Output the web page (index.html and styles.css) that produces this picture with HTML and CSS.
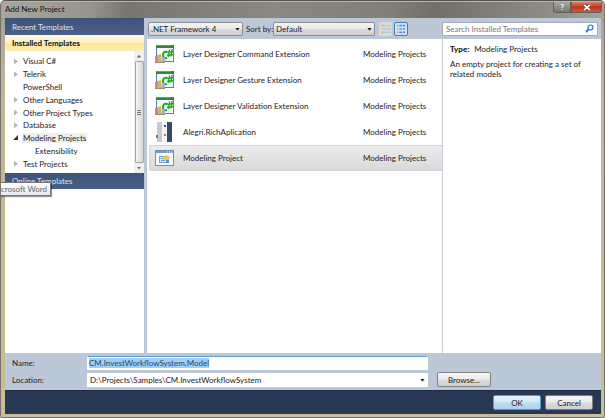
FILE: index.html
```html
<!DOCTYPE html>
<html lang="en">
<head>
<meta charset="utf-8">
<title>Add New Project</title>
<link rel="stylesheet" href="styles.css">
</head>
<body>
<svg class="defs" aria-hidden="true">
  <symbol id="csharp" viewBox="0 0 20 20">
    <rect x="1.500" y="1.500" width="17" height="16" fill="#f4f8fc" stroke="#5f7f9f"/>
    <rect x="1" y="1" width="18" height="3" fill="#2d8a2d"/>
    <path d="M2 1.500h14" stroke="#5cae50"/>
    <path d="M12.500 8q-4.500-1-4.500 3t4 3" fill="none" stroke="#18a818" stroke-width="2"/>
    <path d="M14.500 5.500l-1 7.500M17 5l-1 7.500M12.500 8.500l6-1M12 11.500l6-1" stroke="#18a818" stroke-width="1.300"/>
    <path d="M0 12l3-1v8H0z" fill="#b58ac0"/>
    <path d="M3 11l3-1 1 9H3z" fill="#d9b25a"/>
    <path d="M7 13h3v6H7z" fill="#8fb4e0"/>
    <path d="M0 18.500h10" stroke="#9a8a6a"/>
  </symbol>
</svg>
<div class="window">
  <header class="titlebar">
    <h1>Add New Project</h1>
    <div class="caption">
      <button class="help" aria-label="Help">?</button>
      <button class="close" aria-label="Close"><svg viewBox="0 0 8 7"><path d="M1 .8l6 5.400M7 .8L1 6.200" stroke="#6b2a20" stroke-width="2.800"/><path d="M1 .8l6 5.400M7 .8L1 6.200" stroke="#fff" stroke-width="1.800"/></svg></button>
    </div>
  </header>
  <main class="content">
    <nav class="sidebar">
      <button class="bar">Recent Templates</button>
      <button class="bar active">Installed Templates</button>
      <div class="treebox">
        <ul class="tree">
          <li><i class="shut"></i><span>Visual C#</span></li>
          <li><i class="shut"></i><span>Telerik</span></li>
          <li><i></i><span>PowerShell</span></li>
          <li><i class="shut"></i><span>Other Languages</span></li>
          <li><i class="shut"></i><span>Other Project Types</span></li>
          <li><i class="shut"></i><span>Database</span></li>
          <li><i class="open"></i><span class="picked">Modeling Projects</span></li>
          <li class="child"><i></i><span>Extensibility</span></li>
          <li><i class="shut"></i><span>Test Projects</span></li>
        </ul>
        <div class="scroll"><b class="up"></b><div class="thumb"></div><b class="down"></b></div>
      </div>
      <div class="online">
        <button class="bar">Online Templates</button>
        <div class="tooltip">crosoft Word</div>
      </div>
    </nav>
    <section class="browser">
      <div class="toolbar">
        <div class="combo framework"><select aria-label="Framework"><option>.NET Framework 4</option></select></div>
        <label for="sort">Sort by:</label>
        <div class="combo sort"><select id="sort"><option>Default</option></select></div>
        <button class="view" aria-label="Small icons"><svg viewBox="0 0 12 12"><path d="M1 1h2v2H1zM7 5h2v2H7zM1 9h2v2H1z" fill="#e3a06c"/><path d="M7 1h2v2H7zM1 5h2v2H1zM7 9h2v2H7z" fill="#d9c77c"/><path d="M4 2h2M10 2h2M4 6h2M10 6h2M4 10h2M10 10h2" stroke="#9fb0c8"/></svg></button>
        <button class="view on" aria-label="Medium icons"><svg viewBox="0 0 12 12"><path d="M1 1h2v2H1zM1 9h2v2H1z" fill="#e08a70"/><path d="M1 5h2v2H1z" fill="#d9b060"/><path d="M4 2h3M8 2h3M4 6h3M8 6h3M4 10h3M8 10h3" stroke="#6f8cd0" stroke-width="2"/></svg></button>
        <div class="search">
          <input type="search" aria-label="Search" placeholder="Search Installed Templates">
          <svg viewBox="0 0 9 9"><circle cx="5.500" cy="3.500" r="2.500" fill="#e8f3ff" stroke="#3375bd" stroke-width="1.200"/><path d="M3.500 5.500L1 8" stroke="#3375bd" stroke-width="1.800"/></svg>
        </div>
      </div>
      <div class="panes">
        <ul class="list">
          <li><svg viewBox="0 0 20 20"><use href="#csharp"/></svg><span>Layer Designer Command Extension</span><em>Modeling Projects</em></li>
          <li><svg viewBox="0 0 20 20"><use href="#csharp"/></svg><span>Layer Designer Gesture Extension</span><em>Modeling Projects</em></li>
          <li><svg viewBox="0 0 20 20"><use href="#csharp"/></svg><span>Layer Designer Validation Extension</span><em>Modeling Projects</em></li>
          <li><svg viewBox="0 0 20 20"><path d="M2 0h5v20H2z" fill="#c9c9cb"/><path d="M7 0h5v20H7z" fill="#f4f4f4"/><path d="M12 0h5v20h-5z" fill="#33496f"/><path d="M9 3h2v2H9z" fill="#3547d8"/><path d="M9 12h2v2H9z" fill="#e0603c"/><path d="M1 13h2v3H1z" fill="#777"/></svg><span>Alegri.RichAplication</span><em>Modeling Projects</em></li>
          <li class="selected"><svg viewBox="0 0 20 20"><rect x=".5" y="2.500" width="18" height="15" fill="#f7fbff" stroke="#7d8da3"/><path d="M1 3h17v2H1z" fill="#6b9fdc"/><path d="M12 4h1M14 4h1M16 4h1" stroke="#fff"/><rect x="4.500" y="8.500" width="7" height="6" fill="#d5e6fa" stroke="#6f9fd4"/><path d="M6 10.500h4M6 12.500h4" stroke="#6f9fd4"/><path d="M9 8l3-1 3 2-1 3-3 1-2-2z" fill="#eac25c"/><path d="M11 12h3v3h-3z" fill="#5d91cf"/></svg><span>Modeling Project</span><em>Modeling Projects</em></li>
        </ul>
        <aside class="details">
          <p><strong>Type:</strong> Modeling Projects</p>
          <p>An empty project for creating a set of related models</p>
        </aside>
      </div>
    </section>
  </main>
  <form class="fields">
    <label for="name">Name:</label>
    <div class="name"><input id="name" value="CM.InvestWorkflowSystem.Model"></div>
    <label class="second" for="location">Location:</label>
    <div class="combo location"><select id="location"><option>D:\Projects\Samples\CM.InvestWorkflowSystem</option></select></div>
    <button type="button" class="push">Browse...</button>
  </form>
  <footer class="actions">
    <button class="push ok">OK</button>
    <button class="push">Cancel</button>
  </footer>
</div>
<script src="script.js"></script>
</body>
</html>
```
FILE: script.js
```js
// The project name starts focused and selected, ready to be typed over.
const nameField = document.getElementById("name");
nameField.focus();
nameField.select();
```
FILE: styles.css
```css
* { box-sizing: border-box; }
body { margin: 0; font: 8px/10px Lato, "Open Sans", sans-serif; color: #22222a; }
button, input, select { font: inherit; color: inherit; margin: 0; padding: 0; }
ul { list-style: none; margin: 0; padding: 0; }
svg { display: block; }
.defs { position: absolute; width: 0; height: 0; }

.window {
  display: flex; flex-direction: column; height: 100vh; overflow: hidden;
  padding: 0 3px 3px 4px;
  border: 1px solid #77736a; border-top-color: #56554f; border-radius: 5px 5px 2px 2px;
  background: linear-gradient(#8b8982, #aaa69d 25px, #bfb596 80px, #cabd97);
}
.titlebar {
  flex: none; display: flex; justify-content: space-between; height: 17px;
  margin: 0 -3px 0 -4px; padding: 0 2px 0 4px;
  border-top: 1px solid #b5b3ac;
  background: linear-gradient(100deg, #aaa79e 0, #97948b 15%, #77756d 21%, #8a8880 45%, #817f77 64%, #716f68 72%, #8d8b83 90%, #a5a29a);
}
h1 { margin: 0; font-size: 8px; line-height: 15px; font-weight: 400; color: #111; }
.caption { display: flex; height: 11px; }
.caption button { display: grid; place-items: center; border: 1px solid #625f5b; border-top: 0; line-height: 9px; }
.help { width: 18px; border-radius: 0 0 0 3px; background: linear-gradient(#aaa8a2, #77756f); font-weight: 700; }
.caption .help { color: #fff; }
.close { width: 31px; border-radius: 0 0 3px 0; background: linear-gradient(#d9836c, #bd351d 50%, #d2583a); }
.close svg { width: 8px; height: 7px; }

.content { flex: 1; display: flex; min-height: 0; background: #fff; }
.sidebar { flex: none; width: 139px; }
.bar {
  display: block; width: 100%; height: 17px; padding: 0 0 0 7px; border: 0; text-align: left;
  background: linear-gradient(#3d5277, #4a6087); color: #dfe5ef;
}
.bar.active { height: 16px; background: linear-gradient(#fff8e4, #fff1c3 48%, #ffe69f 52%, #ffebb2); color: #111; font-weight: 700; }
.treebox { display: flex; height: 122px; }
.tree { flex: 1; display: flex; flex-direction: column; padding: 4px 0 3px 8px; }
.tree li { flex: 1; display: flex; align-items: center; }
.tree i { flex: none; width: 9px; height: 6px; }
.tree span { padding: 0 1px; }
.tree .picked { background: #efefef; }
.tree .child { padding-left: 12px; }
.shut::before { content: ""; display: block; width: 4px; height: 6px; margin-left: 1px; background: #b8b8b8; clip-path: polygon(0 0, 100% 50%, 0 100%); }
.open::before { content: ""; display: block; width: 5px; height: 5px; background: #333; clip-path: polygon(100% 0, 100% 100%, 0 100%); }
.scroll { display: flex; flex-direction: column; align-items: center; width: 10px; background: #f0f0f1; }
.scroll b { flex: none; height: 10px; display: grid; place-items: center; }
.scroll b::before { content: ""; width: 4px; height: 3px; background: #606060; }
.scroll .up::before { clip-path: polygon(50% 0, 100% 100%, 0 100%); }
.scroll .down::before { clip-path: polygon(0 0, 100% 0, 50% 100%); }
.thumb { flex: 1; width: 9px; border: 1px solid #a5a5a8; border-radius: 1px; background: linear-gradient(90deg, #f3f3f3, #d7d7da); display: grid; place-items: center; }
.thumb::before { content: ""; width: 4px; height: 5px; background: repeating-linear-gradient(#777 0 1px, transparent 1px 2px); }
.online { position: relative; }
.online .bar { height: 16px; }
.tooltip {
  position: absolute; top: 9px; left: -5px; padding: 1px 3px 1px 1px; white-space: nowrap;
  border: 1px solid #767676; border-left: 0; background: linear-gradient(#fff, #e6e8f0); color: #666;
  box-shadow: 1px 1px 1px #0006;
}

.browser { flex: 1; display: flex; flex-direction: column; min-width: 0; padding-left: 3px; background: #bcc7d8; }
.toolbar { flex: none; display: flex; align-items: center; height: 21px; padding: 0 3px 0 1px; }
.toolbar label { width: 27px; margin-left: 3px; white-space: nowrap; }
.combo { position: relative; }
.combo select {
  display: block; width: 100%; height: 14px; padding: 0 12px 0 2px; appearance: none;
  border: 1px solid #8a8d93; border-radius: 2px; background: linear-gradient(#f3f3f3, #eaeaea 49%, #dadada 51%, #d0d0d0);
}
.combo::after {
  content: ""; position: absolute; right: 3px; top: 50%; width: 5px; height: 3px; margin-top: -1px;
  background: #111; clip-path: polygon(0 0, 100% 0, 50% 100%); pointer-events: none;
}
.framework { width: 95px; }
.sort { width: 102px; }
.view { width: 13px; height: 14px; border: 1px solid transparent; border-radius: 2px; background: #d5dbe4; margin-left: 4px; display: grid; place-items: center; }
.view svg { width: 10px; height: 10px; }
.view.on { width: 14px; margin-left: 2px; border-color: #3c7fb1; background: #cbe6f8; }
.search { display: flex; align-items: center; width: 156px; height: 14px; margin-left: auto; padding: 0 3px; border: 1px solid #a2abbb; background: #fff; }
.search input { flex: 1; min-width: 0; height: 12px; border: 0; outline: 0; background: none; appearance: none; }
.search input::placeholder { color: #73777f; opacity: 1; }
.search svg { width: 9px; height: 9px; }

.panes { flex: 1; display: flex; background: #fff; }
.list { flex: 1; padding-top: 2px; }
.list li { display: flex; align-items: center; height: 26px; padding-left: 5px; margin-left: 2px; border: 1px solid transparent; border-right: 0; }
.list svg { flex: none; width: 20px; height: 20px; margin-right: 8px; }
.list span { flex: 1; }
.list em { width: 79px; font-style: normal; }
.list .selected { border-color: #d5d5d5; border-radius: 2px 0 0 2px; background: linear-gradient(#ececec, #d9d9d9); }
.details { width: 159px; padding: 5px 16px 0 7px; border-left: 1px solid #c5cedd; }
.details p { margin: 0 0 5px; }
.details strong { margin-right: 3px; color: #000; }

.fields {
  flex: none; display: grid; grid-template-columns: 66px minmax(0, 1fr) 54px; align-items: center;
  gap: 2px 9px; padding: 3px 110px 3px 7px; background: #bcc7d8;
}
.name { height: 14px; border: 1px solid #fff; border-top-color: #5f9ed0; background: #fff; padding: 0 1px; }
.name input { display: block; width: 100%; height: 12px; border: 0; outline: 0; background: none; color: #22466e; }
.name input::selection { background: #9fcff5; color: #22466e; }
.second { grid-column: 1; }
.location select { border-color: #fff; border-radius: 0; background: #fff; }
.push {
  height: 15px; border: 1px solid #808080; border-radius: 2px; text-align: center;
  background: linear-gradient(#f5f5f5, #ebebeb 49%, #dcdcdc 51%, #cfcfcf);
}
.actions { flex: none; display: flex; justify-content: flex-end; align-items: center; gap: 4px; height: 24px; padding-right: 8px; background: #293955; border-top: 1px solid #1e2b44; }
.actions .push { width: 48px; }
.actions .ok { border-color: #4b9cc8; background: linear-gradient(#e4f2fb, #d2e8f7 49%, #bcdcf2 51%, #aed4ed); }
```
